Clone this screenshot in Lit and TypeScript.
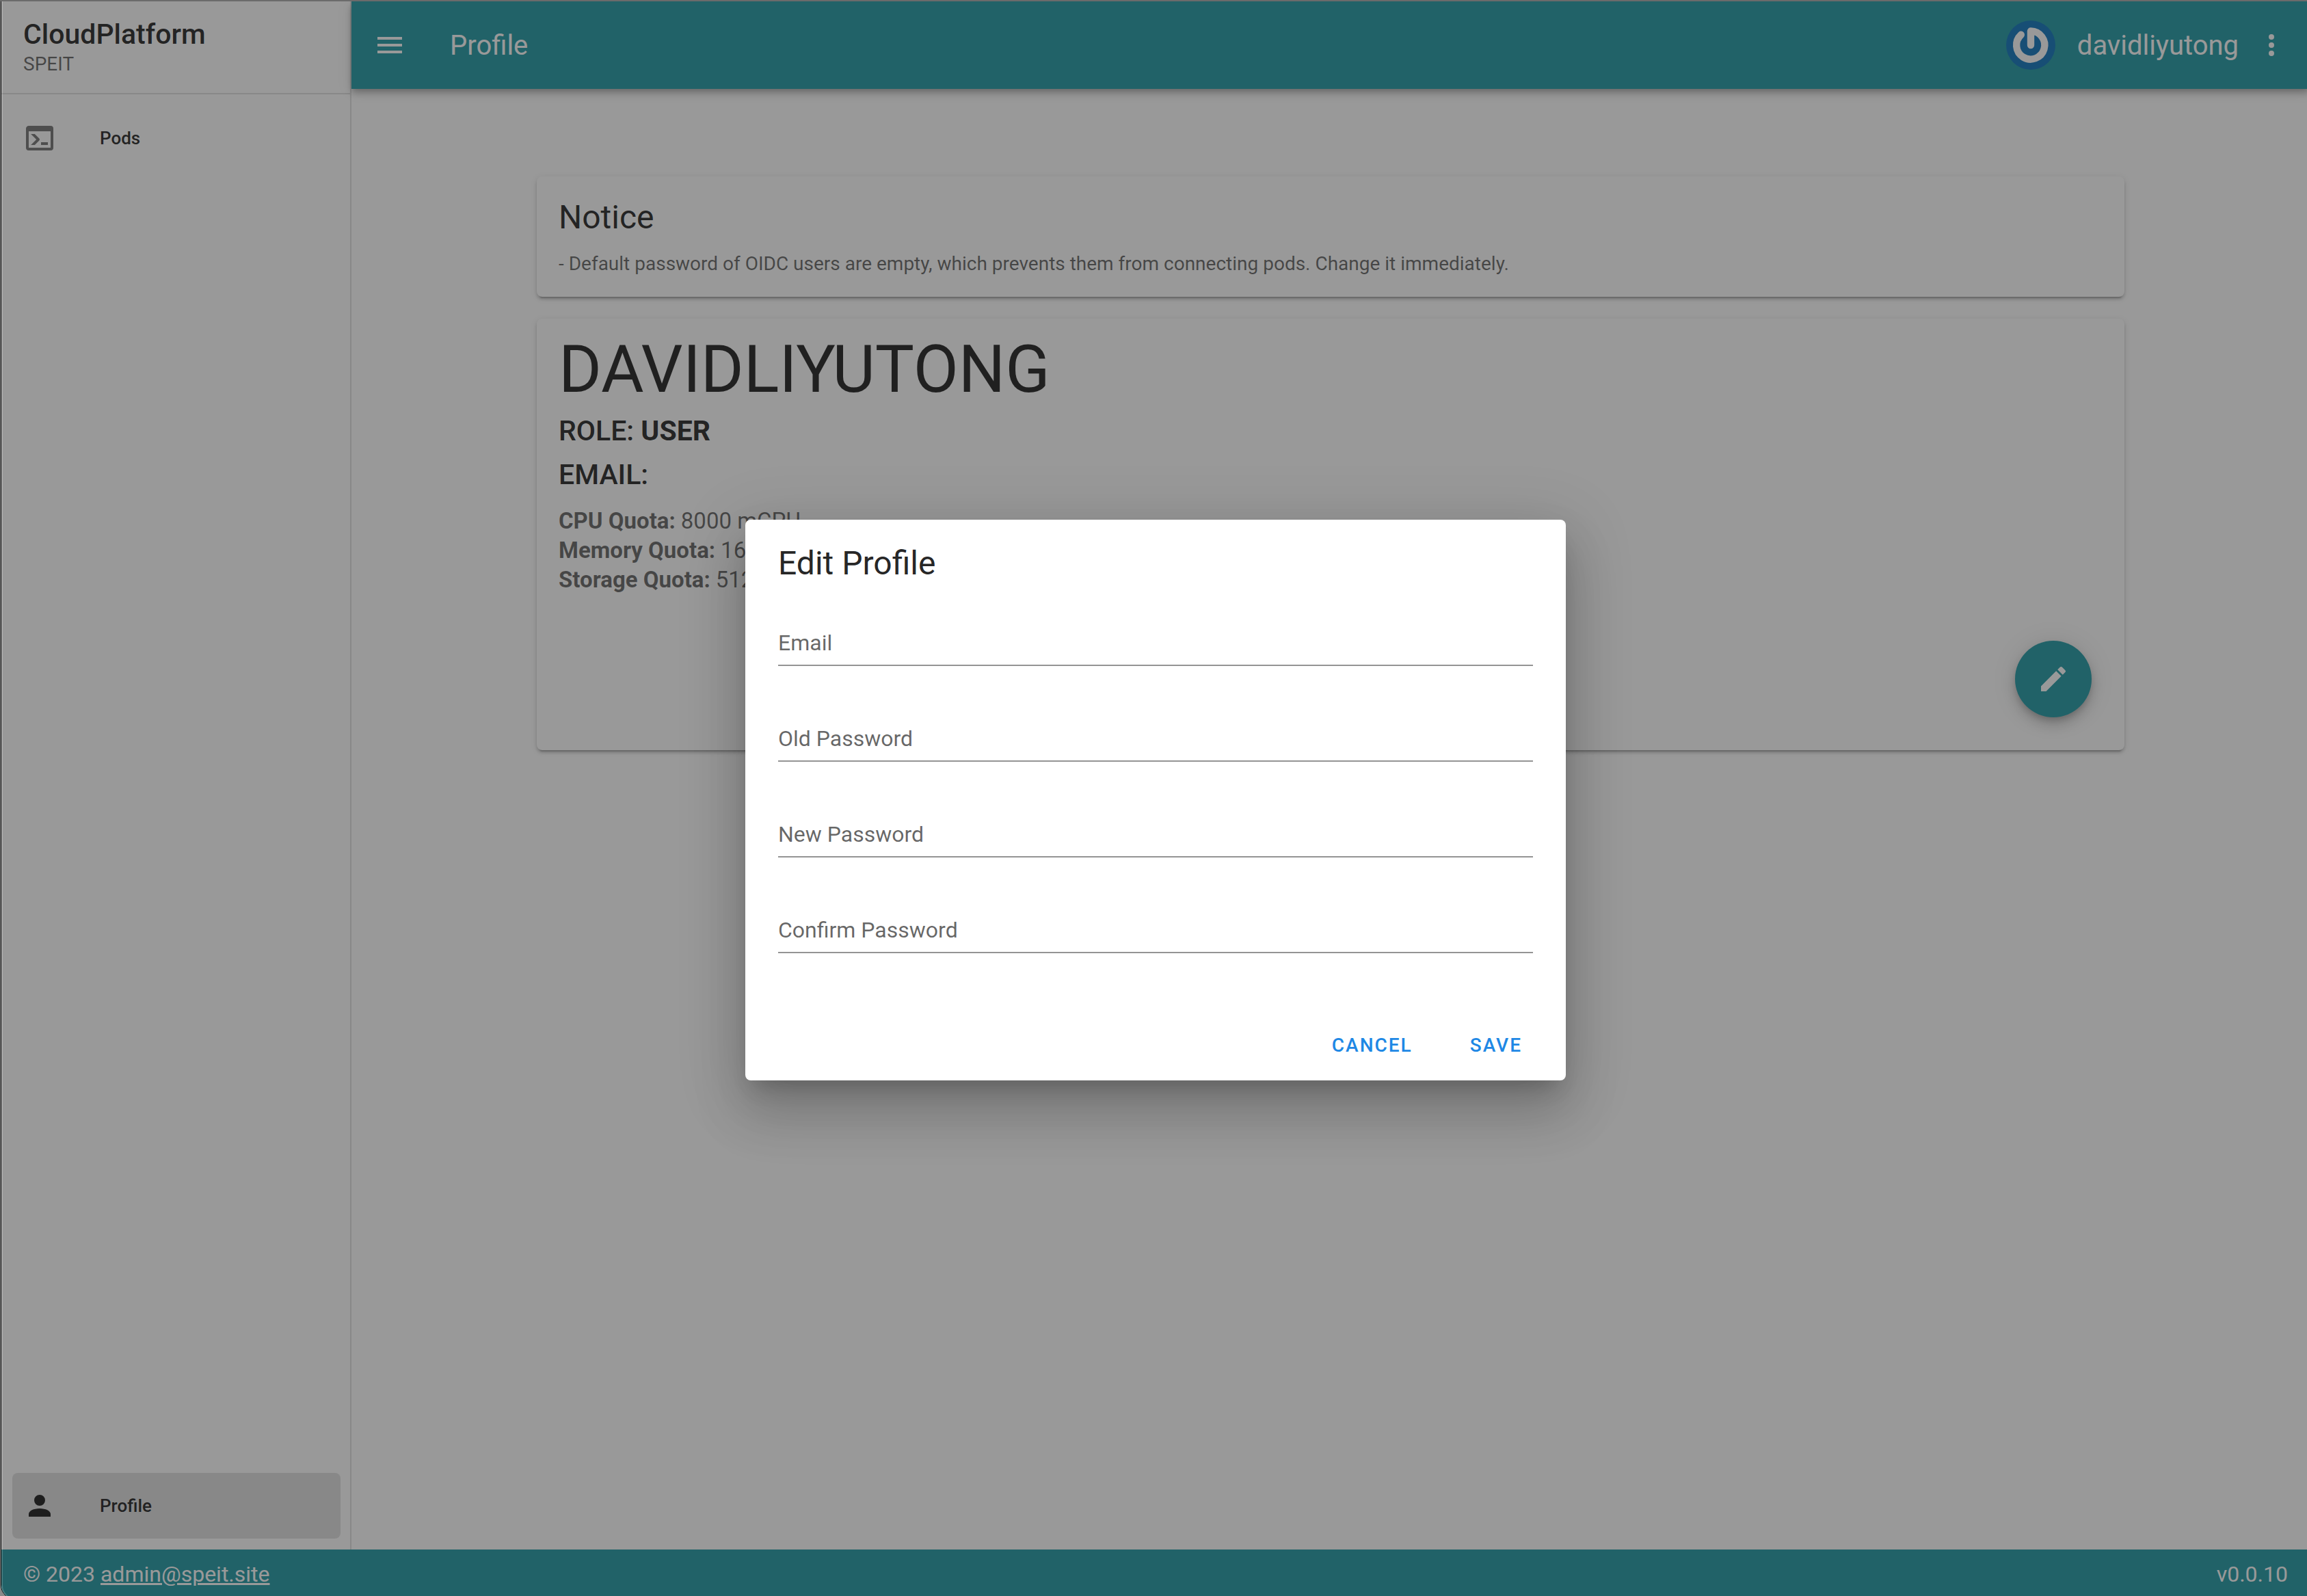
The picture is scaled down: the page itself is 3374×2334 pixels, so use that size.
import { LitElement, html, css, svg } from "lit";
import { customElement, state } from "lit/decorators.js";

const icons = {
  menu: "M3,6H21V8H3V6M3,11H21V13H3V11M3,16H21V18H3V16Z",
  dots: "M12,16A2,2 0 0,1 14,18A2,2 0 0,1 12,20A2,2 0 0,1 10,18A2,2 0 0,1 12,16M12,10A2,2 0 0,1 14,12A2,2 0 0,1 12,14A2,2 0 0,1 10,12A2,2 0 0,1 12,10M12,4A2,2 0 0,1 14,6A2,2 0 0,1 12,8A2,2 0 0,1 10,6A2,2 0 0,1 12,4Z",
  console:
    "M20,19V7H4V19H20M20,3A2,2 0 0,1 22,5V19A2,2 0 0,1 20,21H4A2,2 0 0,1 2,19V5C2,3.89 2.9,3 4,3H20M13,17V15H18V17H13M9.58,13L5.57,9H8.4L11.7,12.3C12.09,12.69 12.09,13.33 11.7,13.72L8.42,17H5.59L9.58,13Z",
  account:
    "M12,4A4,4 0 0,1 16,8A4,4 0 0,1 12,12A4,4 0 0,1 8,8A4,4 0 0,1 12,4M12,14C16.42,14 20,15.79 20,18V20H4V18C4,15.79 7.58,14 12,14Z",
  pencil:
    "M20.71,7.04C21.1,6.65 21.1,6 20.71,5.63L18.37,3.29C18,2.9 17.35,2.9 16.96,3.29L15.12,5.12L18.87,8.87M3,17.25V21H6.75L17.81,9.93L14.06,6.18L3,17.25Z",
};

const icon = (name: keyof typeof icons) =>
  html`<svg class="icon" viewBox="0 0 24 24" aria-hidden="true">${svg`<path d=${icons[name]} />`}</svg>`;

const fields = [
  { id: "email", label: "Email", type: "email" },
  { id: "old-password", label: "Old Password", type: "password" },
  { id: "new-password", label: "New Password", type: "password" },
  { id: "confirm-password", label: "Confirm Password", type: "password" },
];

const quotas = [
  { name: "CPU Quota:", value: "8000 mCPU" },
  { name: "Memory Quota:", value: "16384 MB" },
  { name: "Storage Quota:", value: "51200 MB" },
];

@customElement("app-root")
export class AppRoot extends LitElement {
  @state() private values: Record<string, string> = {};

  static styles = css`
    :host {
      --teal: #229aa5;
      --text: rgba(0, 0, 0, 0.87);
      --muted: rgba(0, 0, 0, 0.6);
      --line: rgba(0, 0, 0, 0.12);
      display: block;
      height: 100vh;
      overflow: hidden;
      background: #8a8a8a;
      font-family: Roboto, sans-serif;
      color: var(--text);
    }
    * {
      box-sizing: border-box;
    }
    h1,
    h2,
    p,
    dl,
    dd {
      margin: 0;
    }
    button {
      border: 0;
      padding: 0;
      background: none;
      color: inherit;
      font: inherit;
      cursor: pointer;
    }
    .icon {
      display: block;
      flex: none;
      width: 48px;
      height: 48px;
      fill: currentColor;
    }
    .edge {
      height: 100%;
      border-top: 2px solid #6b6b6b;
    }
    .window {
      position: relative;
      display: grid;
      grid-template: 1fr 72px / 512px 1fr;
      height: calc(100vh + 2px);
      margin: 0 -4px -4px 2px;
      overflow: hidden;
      border-bottom-left-radius: 20px;
      background: #fff;
      box-shadow: -1px 0 0 #000;
    }
    .sidebar {
      display: flex;
      flex-direction: column;
      border-right: 2px solid var(--line);
    }
    .brand {
      height: 136px;
      padding: 24px 32px 0;
      border-bottom: 2px solid var(--line);
    }
    .brand-name {
      font-size: 41px;
      line-height: 48px;
      font-weight: 500;
    }
    .brand-sub {
      font-size: 28px;
      line-height: 40px;
      color: var(--muted);
    }
    .nav {
      flex: 1;
      display: flex;
      flex-direction: column;
      justify-content: space-between;
      padding: 16px 14px 16px 16px;
    }
    .nav-item {
      display: flex;
      align-items: center;
      gap: 64px;
      height: 96px;
      padding: 0 16px;
      border-radius: 8px;
      color: var(--text);
      font-size: 26px;
      font-weight: 500;
      text-decoration: none;
    }
    .nav-item .icon {
      color: rgba(0, 0, 0, 0.54);
    }
    .nav-item.active {
      background: var(--line);
    }
    .nav-item.active .icon {
      color: var(--text);
    }
    .main {
      min-width: 0;
    }
    .bar {
      display: flex;
      align-items: center;
      height: 128px;
      padding: 0 32px;
      background: var(--teal);
      color: #fff;
      font-size: 40px;
      box-shadow: 0 4px 8px -2px rgba(0, 0, 0, 0.2), 0 8px 10px 0 rgba(0, 0, 0, 0.14),
        0 2px 20px 0 rgba(0, 0, 0, 0.12);
    }
    .bar-title {
      flex: 1;
      margin-left: 64px;
      font-size: 40px;
      font-weight: 400;
    }
    .avatar {
      display: block;
      width: 72px;
      height: 72px;
      margin-right: 32px;
    }
    .more {
      margin-left: 24px;
    }
    .content {
      display: flex;
      flex-direction: column;
      gap: 32px;
      max-width: 2370px;
      margin: 0 auto;
      padding: 128px 24px;
    }
    .card {
      padding: 32px 32px 28px;
      border-radius: 8px;
      background: #fff;
      box-shadow: 0 6px 2px -4px rgba(0, 0, 0, 0.2), 0 4px 4px 0 rgba(0, 0, 0, 0.14),
        0 2px 10px 0 rgba(0, 0, 0, 0.12);
    }
    .card-title {
      margin-bottom: 20px;
      font-size: 48px;
      line-height: 56px;
      font-weight: 400;
    }
    .card-text {
      font-size: 28px;
      line-height: 40px;
      color: var(--muted);
    }
    .profile {
      display: flex;
      flex-direction: column;
      padding-bottom: 48px;
    }
    .user {
      margin-bottom: 16px;
      font-size: 96px;
      line-height: 84px;
      font-weight: 400;
      text-transform: uppercase;
    }
    .fact {
      font-size: 41px;
      line-height: 64px;
      font-weight: 500;
      text-transform: uppercase;
    }
    .quotas {
      margin: 14px 0 68px;
      font-size: 33px;
      line-height: 43px;
      color: var(--muted);
    }
    .quota {
      display: flex;
      gap: 8px;
    }
    .quota dt {
      font-weight: 700;
    }
    .fab {
      display: grid;
      place-items: center;
      align-self: flex-end;
      width: 112px;
      height: 112px;
      margin-right: 16px;
      border-radius: 50%;
      background: var(--teal);
      color: #fff;
      box-shadow: 0 6px 10px -2px rgba(0, 0, 0, 0.2), 0 12px 20px 0 rgba(0, 0, 0, 0.14),
        0 2px 36px 0 rgba(0, 0, 0, 0.12);
    }
    .footer {
      grid-column: 1 / -1;
      display: flex;
      align-items: center;
      justify-content: space-between;
      padding: 0 32px;
      background: var(--teal);
      color: #fff;
      font-size: 32px;
    }
    .footer a {
      color: inherit;
    }
    .scrim {
      position: absolute;
      inset: 0;
      display: grid;
      place-items: center;
      border-bottom-left-radius: 20px;
      background: rgba(33, 33, 33, 0.46);
      box-shadow: inset 2px 0 0 rgba(255, 255, 255, 0.16);
    }
    .dialog {
      width: 1200px;
      max-width: 90%;
      border-radius: 8px;
      background: #fff;
      box-shadow: 0 22px 30px -14px rgba(0, 0, 0, 0.2), 0 48px 76px 6px rgba(0, 0, 0, 0.14),
        0 18px 92px 16px rgba(0, 0, 0, 0.12);
    }
    .dialog-title {
      padding: 32px 48px 0;
      font-size: 48px;
      line-height: 64px;
      font-weight: 400;
    }
    .fields {
      display: flex;
      flex-direction: column;
      gap: 76px;
      padding: 54px 48px 98px;
    }
    .field {
      display: grid;
      height: 64px;
      border-bottom: 2px solid rgba(0, 0, 0, 0.42);
      font-size: 32px;
    }
    .field > * {
      grid-area: 1 / 1;
    }
    .field label {
      line-height: 60px;
      color: var(--muted);
      pointer-events: none;
    }
    .field input {
      min-width: 0;
      border: 0;
      padding: 0;
      outline: 0;
      background: none;
      color: var(--text);
      font: inherit;
    }
    .field label[hidden] {
      display: none;
    }
    .actions {
      display: flex;
      justify-content: flex-end;
      gap: 20px;
      padding: 0 32px 16px;
    }
    .action {
      height: 72px;
      padding: 0 32px;
      color: #1e88e5;
      font-size: 28px;
      font-weight: 500;
      letter-spacing: 2px;
      text-transform: uppercase;
    }
  `;

  private onInput(id: string, event: Event) {
    this.values = { ...this.values, [id]: (event.target as HTMLInputElement).value };
  }

  private renderAvatar() {
    return html`<svg class="avatar" viewBox="0 0 72 72" role="img" aria-label="Avatar">
      <circle cx="36" cy="36" r="36" fill="#0f75bc" />
      <path
        d="M21.8 20.8 A20.6 20.6 0 1 0 36 15.4 L36 36"
        fill="none"
        stroke="#fff"
        stroke-width="10.4"
        stroke-linecap="round"
        stroke-linejoin="round"
      />
    </svg>`;
  }

  private renderSidebar() {
    return html`<aside class="sidebar">
      <div class="brand">
        <div class="brand-name">CloudPlatform</div>
        <div class="brand-sub">SPEIT</div>
      </div>
      <nav class="nav">
        <a class="nav-item" href="#pods">${icon("console")}Pods</a>
        <a class="nav-item active" href="#profile" aria-current="page">${icon("account")}Profile</a>
      </nav>
    </aside>`;
  }

  private renderMain() {
    return html`<div class="main">
      <header class="bar">
        <button aria-label="Toggle navigation">${icon("menu")}</button>
        <h1 class="bar-title">Profile</h1>
        ${this.renderAvatar()}
        <span>davidliyutong</span>
        <button class="more" aria-label="More">${icon("dots")}</button>
      </header>
      <main class="content">
        <section class="card">
          <h2 class="card-title">Notice</h2>
          <p class="card-text">
            - Default password of OIDC users are empty, which prevents them from connecting pods. Change it
            immediately.
          </p>
        </section>
        <section class="card profile">
          <h2 class="user">davidliyutong</h2>
          <p class="fact">Role: <b>user</b></p>
          <p class="fact">Email:</p>
          <dl class="quotas">
            ${quotas.map((q) => html`<div class="quota"><dt>${q.name}</dt><dd>${q.value}</dd></div>`)}
          </dl>
          <button class="fab" aria-label="Edit profile">${icon("pencil")}</button>
        </section>
      </main>
    </div>`;
  }

  private renderDialog() {
    return html`<div class="scrim">
      <form class="dialog" role="dialog" aria-labelledby="dialog-title" @submit=${(e: Event) => e.preventDefault()}>
        <h2 class="dialog-title" id="dialog-title">Edit Profile</h2>
        <div class="fields">
          ${fields.map(
            (f) => html`<div class="field">
              <label for=${f.id} ?hidden=${!!this.values[f.id]}>${f.label}</label>
              <input
                id=${f.id}
                type=${f.type}
                .value=${this.values[f.id] ?? ""}
                @input=${(e: Event) => this.onInput(f.id, e)}
              />
            </div>`,
          )}
        </div>
        <div class="actions">
          <button class="action" type="button">Cancel</button>
          <button class="action" type="submit">Save</button>
        </div>
      </form>
    </div>`;
  }

  render() {
    return html`<div class="edge">
      <div class="window">
        ${this.renderSidebar()} ${this.renderMain()}
        <footer class="footer">
          <span>© 2023 <a href="mailto:admin@speit.site">admin@speit.site</a></span>
          <span>v0.0.10</span>
        </footer>
        ${this.renderDialog()}
      </div>
    </div>`;
  }
}
